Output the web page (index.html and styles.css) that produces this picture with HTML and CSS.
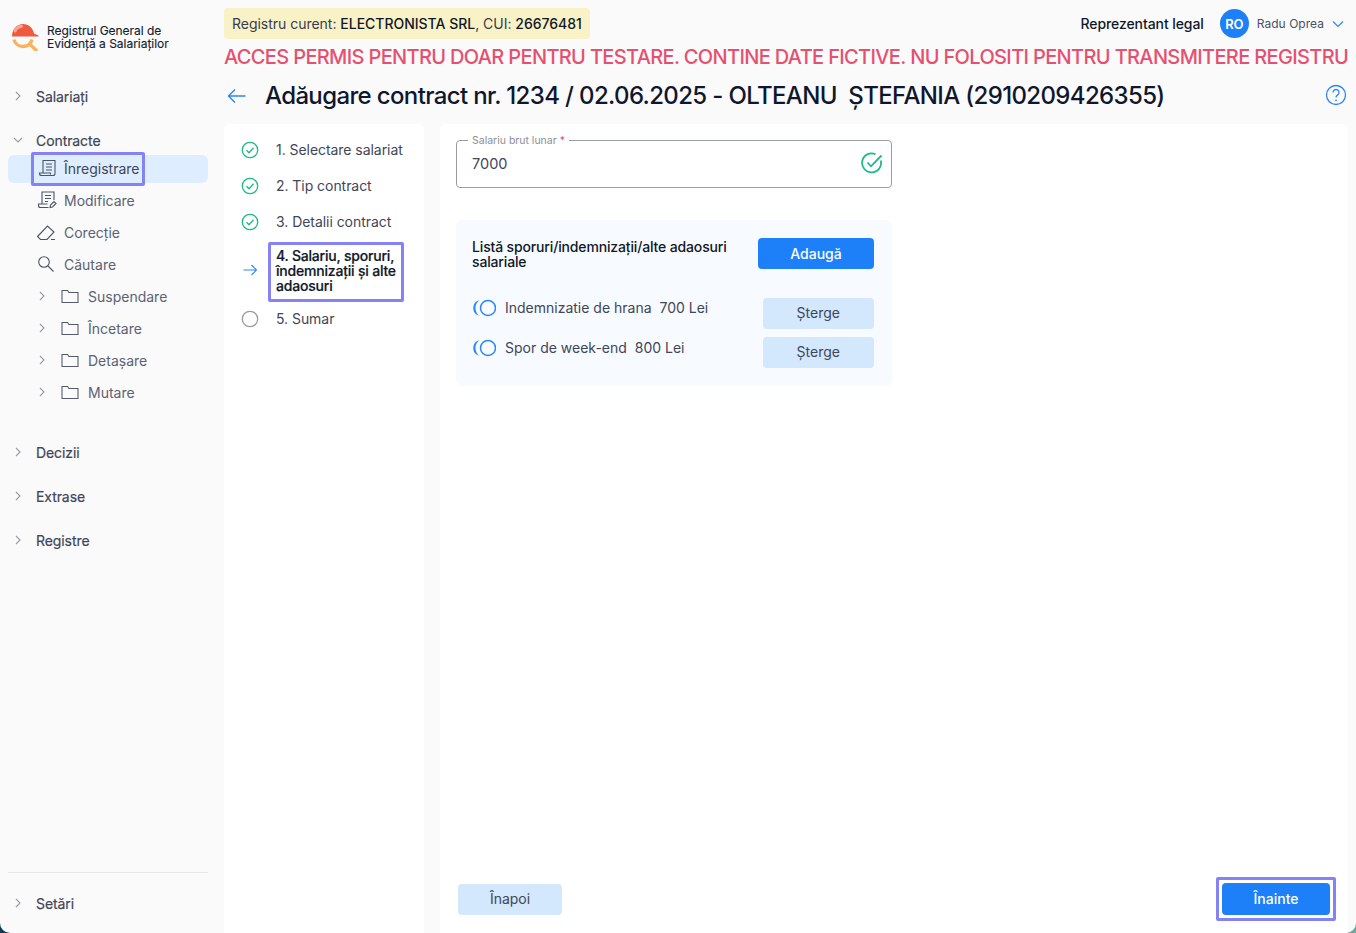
FILE: index.html
```html
<!DOCTYPE html>
<html lang="ro">
<head>
<meta charset="utf-8">
<title>Registrul General de Evidență a Salariaților</title>
<link rel="stylesheet" href="styles.css">
</head>
<body>
<div class="app">
  <aside class="sidebar">
    <div class="brand">
      <svg class="logo" width="28" height="28" viewBox="0 0 28 28" fill="none">
        <path d="M1 13.500C1 6 6 1 12 1c5.500 0 10 4 11 9.500l4.500 2v1z" fill="#f0583f"/>
        <path d="M4 8c1.300-2.600 3.600-4.300 6.500-4.700" stroke="#f9a593" stroke-width="3" stroke-linecap="round"/>
        <path d="M3 16.500c1 4.500 4.800 7 9 7 4.500 0 8-2.800 9-7" stroke="#f8b35e" stroke-width="3.400"/>
        <path d="M19 21.500l6 5.500" stroke="#f8b35e" stroke-width="3.400" stroke-linecap="round"/>
      </svg>
      <div class="brand-text">Registrul General de<br>Evidență a Salariaților</div>
    </div>
    <nav class="nav">
      <div class="sec"><svg class="chev" viewBox="0 0 10 10"><path d="M3 1l4 4-4 4"/></svg><span>Salariați</span></div>
      <div class="sec open"><svg class="chev" viewBox="0 0 10 10"><path d="M1 3l4 4 4-4"/></svg><span>Contracte</span></div>
      <div class="item active">
        <div class="focus-box">
          <svg class="ico" viewBox="0 0 20 20"><path d="M5 15V2.500h12V15.500a2 2 0 0 1-2 2H3.500a2 2 0 0 1-2-2V15H12.500v1.500M8 6h6M8 9h6M8 12h6"/></svg>
          <span>Înregistrare</span>
        </div>
      </div>
      <div class="item"><svg class="ico" viewBox="0 0 20 20"><path d="M5 14V2h12v8M8 5.500h6M8 8.500h6M8 11.500h3M11.500 17.500H3.500a2 2 0 0 1-2-2V14h9M13 17.500l.5-2.500 3.500-3.500 2 2-3.500 3.500z"/></svg><span>Modificare</span></div>
      <div class="item"><svg class="ico" viewBox="0 0 20 20"><path d="M.5 14.500l10-10.500 6.500 6-7 7.500H3.500zM14 17.500h4"/></svg><span>Corecție</span></div>
      <div class="item"><svg class="ico" viewBox="0 0 20 20"><circle cx="7" cy="8" r="5.300"/><path d="M11 12l5.500 5.500"/></svg><span>Căutare</span></div>
      <div class="sub"><svg class="chev" viewBox="0 0 10 10"><path d="M3 1l4 4-4 4"/></svg><svg class="folder" viewBox="0 0 18 16"><path d="M1 14.500V2.500h5.500l1.500 2h9v10z"/></svg><span>Suspendare</span></div>
      <div class="sub"><svg class="chev" viewBox="0 0 10 10"><path d="M3 1l4 4-4 4"/></svg><svg class="folder" viewBox="0 0 18 16"><path d="M1 14.500V2.500h5.500l1.500 2h9v10z"/></svg><span>Încetare</span></div>
      <div class="sub"><svg class="chev" viewBox="0 0 10 10"><path d="M3 1l4 4-4 4"/></svg><svg class="folder" viewBox="0 0 18 16"><path d="M1 14.500V2.500h5.500l1.500 2h9v10z"/></svg><span>Detașare</span></div>
      <div class="sub"><svg class="chev" viewBox="0 0 10 10"><path d="M3 1l4 4-4 4"/></svg><svg class="folder" viewBox="0 0 18 16"><path d="M1 14.500V2.500h5.500l1.500 2h9v10z"/></svg><span>Mutare</span></div>
      <div class="sec first"><svg class="chev" viewBox="0 0 10 10"><path d="M3 1l4 4-4 4"/></svg><span>Decizii</span></div>
      <div class="sec"><svg class="chev" viewBox="0 0 10 10"><path d="M3 1l4 4-4 4"/></svg><span>Extrase</span></div>
      <div class="sec"><svg class="chev" viewBox="0 0 10 10"><path d="M3 1l4 4-4 4"/></svg><span>Registre</span></div>
    </nav>
    <div class="side-foot">
      <div class="sec"><svg class="chev" viewBox="0 0 10 10"><path d="M3 1l4 4-4 4"/></svg><span>Setări</span></div>
    </div>
  </aside>

  <main class="main">
    <header class="topbar">
      <div class="registry">Registru curent: <b>ELECTRONISTA SRL</b>, CUI: <b>26676481</b></div>
      <div class="user">
        <span class="role">Reprezentant legal</span>
        <span class="avatar">RO</span>
        <span class="uname">Radu Oprea</span>
        <svg class="caret" viewBox="0 0 12 8"><path d="M1 1.500l5 5 5-5"/></svg>
      </div>
    </header>
    <div class="warning">ACCES PERMIS PENTRU DOAR PENTRU TESTARE. CONTINE DATE FICTIVE. NU FOLOSITI PENTRU TRANSMITERE REGISTRU</div>
    <div class="title-row">
      <svg class="back" viewBox="0 0 20 16"><path d="M18.500 8H1.500M8 1.500L1.500 8 8 14.500"/></svg>
      <h1>Adăugare contract nr. 1234 / 02.06.2025 - OLTEANU&nbsp; ȘTEFANIA (2910209426355)</h1>
      <svg class="help" viewBox="0 0 22 22"><circle cx="11" cy="11" r="9.500"/><path d="M8 8.500a3 3 0 1 1 4.500 2.600c-1 .6-1.500 1.100-1.500 2.400"/><circle class="dot" cx="11" cy="16.300" r=".9"/></svg>
    </div>
    <div class="panels">
      <section class="steps">
        <div class="step"><svg class="st" viewBox="0 0 18 18"><circle cx="9" cy="9" r="7.700"/><path d="M5.500 9.200l2.500 2.500 4.500-5"/></svg><span>1. Selectare salariat</span></div>
        <div class="step"><svg class="st" viewBox="0 0 18 18"><circle cx="9" cy="9" r="7.700"/><path d="M5.500 9.200l2.500 2.500 4.500-5"/></svg><span>2. Tip contract</span></div>
        <div class="step"><svg class="st" viewBox="0 0 18 18"><circle cx="9" cy="9" r="7.700"/><path d="M5.500 9.200l2.500 2.500 4.500-5"/></svg><span>3. Detalii contract</span></div>
        <div class="step current"><svg class="st arrow" viewBox="0 0 18 18"><path d="M2.500 9h13M10.500 4l5 5-5 5"/></svg><div class="focus-step">4. Salariu, sporuri, îndemnizații și alte adaosuri</div></div>
        <div class="step last"><svg class="st todo" viewBox="0 0 18 18"><circle cx="9" cy="9" r="7.700"/></svg><span>5. Sumar</span></div>
      </section>
      <section class="content">
        <div class="form-col">
          <fieldset class="field">
            <legend>Salariu brut lunar <em>*</em></legend>
            <div class="field-row">
              <span>7000</span>
              <svg class="ok" viewBox="0 0 22 22"><path d="M19.800 8.500A9.500 9.500 0 1 1 14.500 2.200"/><path d="M6.500 10.500l3.500 3.800L20.500 3.500"/></svg>
            </div>
          </fieldset>
          <div class="bonus">
            <div class="bonus-head">
              <div class="bonus-title">Listă sporuri/indemnizații/alte adaosuri salariale</div>
              <button class="btn primary add">Adaugă</button>
            </div>
            <div class="bonus-row first-row">
              <svg class="coins" viewBox="0 0 24 18"><circle cx="16" cy="9" r="7.500"/><path class="crescent" d="M7.500 1.200A8 8 0 0 0 7.500 16.800A9.500 9.500 0 0 1 7.500 1.200z"/></svg>
              <span class="bonus-text">Indemnizatie de hrana&nbsp; 700 Lei</span>
              <button class="btn soft del">Șterge</button>
            </div>
            <div class="bonus-row">
              <svg class="coins" viewBox="0 0 24 18"><circle cx="16" cy="9" r="7.500"/><path class="crescent" d="M7.500 1.200A8 8 0 0 0 7.500 16.800A9.500 9.500 0 0 1 7.500 1.200z"/></svg>
              <span class="bonus-text">Spor de week-end&nbsp; 800 Lei</span>
              <button class="btn soft del">Șterge</button>
            </div>
          </div>
        </div>
        <div class="actions">
          <button class="btn soft back-btn">Înapoi</button>
          <div class="focus-next"><button class="btn primary next">Înainte</button></div>
        </div>
      </section>
    </div>
  </main>
</div>
</body>
</html>
```
FILE: styles.css
```css
* { box-sizing: border-box; }
html, body { margin: 0; height: 100%; }
body {
  background: linear-gradient(90deg, #0f3a5a, #6fa59a);
  font-family: Inter, "Noto Sans", sans-serif;
  color: #3f4659;
  overflow: hidden;
}
svg { display: block; fill: none; flex: none; }
.app {
  display: flex;
  width: 1356px;
  height: 933px;
  background: #fafafb;
  border-radius: 0 0 10px 10px;
  overflow: hidden;
}
.sidebar {
  width: 224px;
  flex: none;
  display: flex;
  flex-direction: column;
  padding: 0 16px 0 8px;
}
.brand { display: flex; align-items: center; gap: 8px; height: 74px; padding: 0 0 0 3px; }
.brand-text { font-size: 12px; line-height: 13px; color: #151d33; letter-spacing: -.03px; -webkit-text-stroke: .15px #151d33; }
.nav { flex: 1; }
.sec { display: flex; align-items: center; height: 24px; gap: 13px; padding-left: 5px; font-size: 14px; color: #3f4659; letter-spacing: -.08px; margin-top: 20px; -webkit-text-stroke: .2px #3f4659; }
.sec:first-child { margin-top: 10px; }
.sec.first { margin-top: 32px; }
.sec.open { height: 22px; margin-top: 21px; }
.chev { width: 10px; height: 10px; stroke: #9a9ca3; stroke-width: 1.100; }
.item { display: flex; align-items: center; height: 32px; padding-left: 29px; gap: 7px; font-size: 14px; color: #5b6273; }
.ico { width: 20px; height: 20px; stroke: #4d5466; stroke-width: 1.100; }
.item.active { height: 28px; margin: 4px 0 1px; background: #deedff; border-radius: 6px; padding-left: 23px; color: #3f4659; }
.focus-box { display: flex; align-items: center; gap: 6px; height: 34px; padding: 0 2px 2px 4px; border: 3px solid #8482f5; border-radius: 2px; }
.sub { display: flex; align-items: center; height: 32px; padding-left: 29px; font-size: 14px; color: #5b6273; }
.sub .chev { margin-right: 14px; }
.folder { width: 18px; height: 16px; stroke: #555c6d; stroke-width: 1.100; margin-right: 9px; }
.side-foot { height: 61px; border-top: 1px solid #e6e6e8; padding-top: 18px; }
.side-foot .sec { margin-top: 0; }

.main { flex: 1; display: flex; flex-direction: column; min-width: 0; padding-right: 8px; }
.topbar { display: flex; align-items: center; justify-content: space-between; height: 31px; margin-top: 8px; }
.registry { background: #faf2c7; border-radius: 4px; height: 31px; display: flex; align-items: center; gap: 0; padding: 0 8px; font-size: 14px; color: #363c4e; white-space: pre; letter-spacing: -.02px; }
.registry b { font-weight: 500; color: #101828; }
.user { display: flex; align-items: center; font-size: 13px; padding-right: 4px; }
.role { font-size: 14px; color: #101828; font-weight: 500; letter-spacing: -.08px; margin-right: 16px; }
.avatar { width: 29px; height: 29px; border-radius: 50%; background: #1e80f8; color: #fff; font-weight: 600; font-size: 13px; letter-spacing: -.3px; display: flex; align-items: center; justify-content: center; margin-right: 8px; }
.uname { font-size: 12px; color: #4a5163; margin-right: 8px; letter-spacing: .03px; }
.caret { width: 12px; height: 8px; stroke: #2c86f5; stroke-width: 1.200; }
.warning { font-size: 20px; line-height: 24px; margin-top: 6px; font-weight: 500; color: #e6506f; white-space: nowrap; letter-spacing: -.65px; }
.title-row { display: flex; align-items: center; height: 38px; margin-top: 7px; }
.back { width: 20px; height: 16px; stroke: #2b86f5; stroke-width: 1.400; margin: 2px 0 0 3px; }
h1 { flex: 1; margin: 0 0 0 18px; font-size: 24px; font-weight: 500; color: #0f172e; white-space: nowrap; letter-spacing: -.64px; }
.help { width: 22px; height: 22px; stroke: #2b86f5; stroke-width: 1.300; margin: 0 1px 0 0; }
.help .dot { fill: #2b86f5; stroke: none; }

.panels { flex: 1; display: flex; gap: 16px; min-height: 0; margin-top: 10px; }
.steps { width: 200px; flex: none; background: #fff; border-radius: 6px 6px 0 0; padding: 7px 0 0 17px; }
.step { display: flex; align-items: center; gap: 17px; min-height: 36px; font-size: 14px; color: #3f4659; letter-spacing: -.05px; }
.st { width: 18px; height: 18px; stroke: #1dbb85; stroke-width: 1.300; margin-top: 2px; }
.st.arrow { stroke: #2b86f5; stroke-width: 1.100; margin-top: -4px; }
.st.todo { stroke: #9b9b9f; margin-top: 0; }
.step.current { align-items: center; gap: 9px; min-height: 60px; margin-top: 3px; }
.focus-step { width: 136px; height: 60px; border: 3px solid #8482f5; border-radius: 2px; padding: 3px 3px 0 5px; font-size: 14px; line-height: 15px; font-weight: 500; color: #101828; letter-spacing: -.2px; -webkit-text-stroke: .2px #101828; }
.step.last { margin-top: -1px; }
.step.last span { margin-top: -2px; }

.content { flex: 1; background: #fff; border-radius: 6px 6px 0 0; padding: 16px 12px 12px 16px; display: flex; flex-direction: column; min-width: 0; }
.form-col { width: 436px; flex: 1; }
.field { margin: -7px 0 0; padding: 0 8px 0 15px; height: 55px; border: 1px solid #9a9ca3; border-radius: 4px; min-width: 0; }
.field legend { font-size: 10.500px; line-height: 12px; color: #8c8e95; padding: 2px 4px 0; margin-left: -4px; }
.field legend em { color: #e6506f; font-style: normal; }
.field-row { display: flex; align-items: center; justify-content: space-between; height: 32px; font-size: 14.500px; color: #3f4659; }
.ok { width: 22px; height: 22px; stroke: #1dbb85; stroke-width: 1.800; }
.bonus { margin-top: 32px; background: #f7faff; border-radius: 6px; height: 166px; padding: 18px 18px 0 16px; }
.bonus-head { display: flex; align-items: center; justify-content: space-between; height: 31px; }
.bonus-title { width: 262px; font-size: 14px; line-height: 15px; color: #101828; font-weight: 500; letter-spacing: -.15px; }
.btn { border: 0; font-family: inherit; font-size: 14px; cursor: pointer; }
.primary { background: #1e80f8; color: #fff; font-weight: 500; border-radius: 4px; }
.soft { background: #d3e7fd; color: #3f4659; border-radius: 4px; }
.add { width: 116px; height: 31px; }
.bonus-row { display: flex; align-items: center; height: 31px; margin-top: 8px; }
.bonus-row.first-row { margin-top: 29px; }
.coins { width: 24px; height: 18px; stroke: #2b86f5; stroke-width: 1.500; margin: -10px 9px 0 0; }
.coins .crescent { fill: #2b86f5; stroke: none; }
.bonus-text { flex: 1; font-size: 14px; color: #3f4659; margin-top: -10px; }
.first-row .coins { margin-top: -11px; }
.first-row .bonus-text { margin-top: -12px; }
.del { width: 111.500px; height: 31px; padding: 0 0 2px; }
.actions { display: flex; align-items: center; justify-content: space-between; height: 44px; padding-left: 2px; }
.back-btn { width: 104px; height: 31px; padding: 0 0 2px; }
.focus-next { border: 3px solid #8482f5; border-radius: 2px; padding: 3px; height: 44px; width: 120px; }
.next { width: 108px; height: 32px; display: block; padding: 0 0 2px; }
```
